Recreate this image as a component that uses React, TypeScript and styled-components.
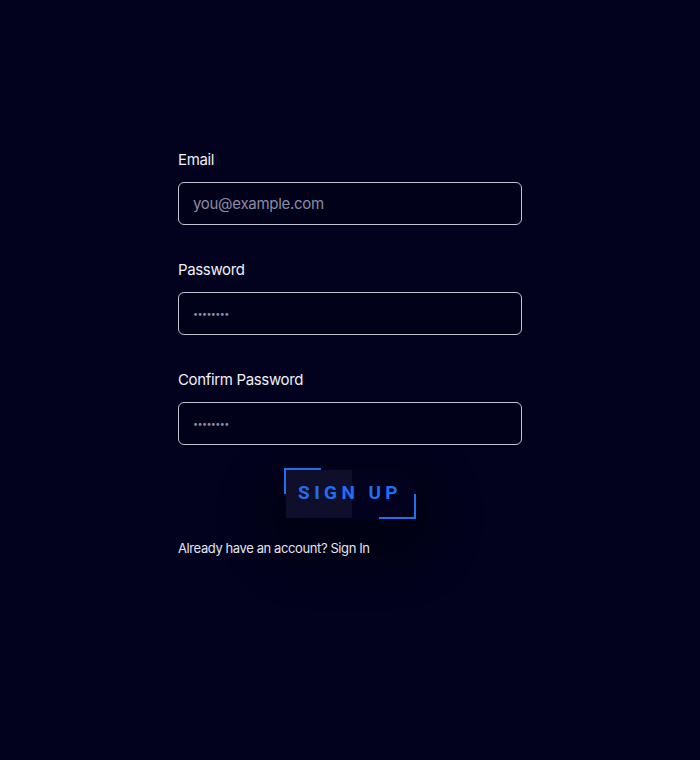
import React from "react";
import styled, { createGlobalStyle } from "styled-components";

const Global = createGlobalStyle`
  html, body { margin: 0; padding: 0; background: #02021f; }
  body { font-family: Inter, "Liberation Sans", sans-serif; }
`;

const Page = styled.div`
  min-height: 760px;
  background: #02021f;
  display: flex;
  justify-content: center;
  padding-top: 150px;
  box-sizing: border-box;
`;

const Form = styled.form`
  width: 344px;
  display: flex;
  flex-direction: column;
`;

const Field = styled.div`
  display: flex;
  flex-direction: column;
  gap: 12px;
  & + & { margin-top: 35px; }
`;

const Label = styled.label`
  color: #f0f0f8;
  font-size: 15px;
  line-height: 20px;
  font-weight: 400;
  letter-spacing: -0.35px;
`;

const Input = styled.input<{ $dots?: boolean }>`
  position: relative;
  z-index: 1;
  box-sizing: border-box;
  height: 43px;
  width: 100%;
  background: #01011a;
  border: 1px solid #c4c4d0;
  border-radius: 6px;
  padding: 0 14px;
  color: #e8e8f0;
  font-family: Inter, "Liberation Sans", sans-serif;
  font-size: ${(p) => (p.$dots ? "9px" : "15px")};
  letter-spacing: ${(p) => (p.$dots ? "-0.6px" : "-0.3px")};
  outline: none;
  &::placeholder { color: #8c8ca4; }
`;

const ButtonRow = styled.div`
  display: flex;
  justify-content: center;
  margin-top: 23px;
  margin-bottom: 20px;
`;

const SignUp = styled.button`
  position: relative;
  width: 132px;
  height: 51px;
  background: transparent;
  border: none;
  padding: 0;
  color: #1f6ff0;
  font-family: Roboto, "Liberation Sans", sans-serif;
  font-weight: 700;
  font-size: 19px;
  letter-spacing: 4.4px;
  cursor: pointer;
  border-radius: 40px;
  box-shadow: 0 22px 36px 30px rgba(0, 0, 8, 0.4);
  &::before {
    content: "";
    position: absolute;
    left: 2px;
    top: 2px;
    width: 66px;
    height: 48px;
    background: #0f0f2b;
  }
`;

const Corner = styled.span<{ $pos: "tl" | "br" }>`
  position: absolute;
  width: 35px;
  height: ${(p) => (p.$pos === "tl" ? "24px" : "23px")};
  ${(p) =>
    p.$pos === "tl"
      ? "top: 0; left: 0; border-top: 2px solid #1f6ff0; border-left: 2px solid #1f6ff0;"
      : "bottom: 0; right: 0; border-bottom: 2px solid #1f6ff0; border-right: 2px solid #1f6ff0;"}
`;

const ButtonText = styled.span`
  position: relative;
  top: -1px;
`;

const Footer = styled.p`
  position: relative;
  z-index: 1;
  margin: 0;
  color: #e4e4f0;
  font-size: 13px;
  line-height: 18px;
  letter-spacing: -0.4px;
`;

export default function App() {
  return (
    <>
      <Global />
      <Page>
        <Form onSubmit={(e) => e.preventDefault()}>
          <Field>
            <Label htmlFor="email">Email</Label>
            <Input id="email" type="email" placeholder="you@example.com" />
          </Field>
          <Field>
            <Label htmlFor="password">Password</Label>
            <Input id="password" type="password" $dots placeholder="••••••••" />
          </Field>
          <Field>
            <Label htmlFor="confirm">Confirm Password</Label>
            <Input id="confirm" type="password" $dots placeholder="••••••••" />
          </Field>
          <ButtonRow>
            <SignUp type="submit">
              <Corner $pos="tl" />
              <Corner $pos="br" />
              <ButtonText>SIGN UP</ButtonText>
            </SignUp>
          </ButtonRow>
          <Footer>Already have an account? Sign In</Footer>
        </Form>
      </Page>
    </>
  );
}
